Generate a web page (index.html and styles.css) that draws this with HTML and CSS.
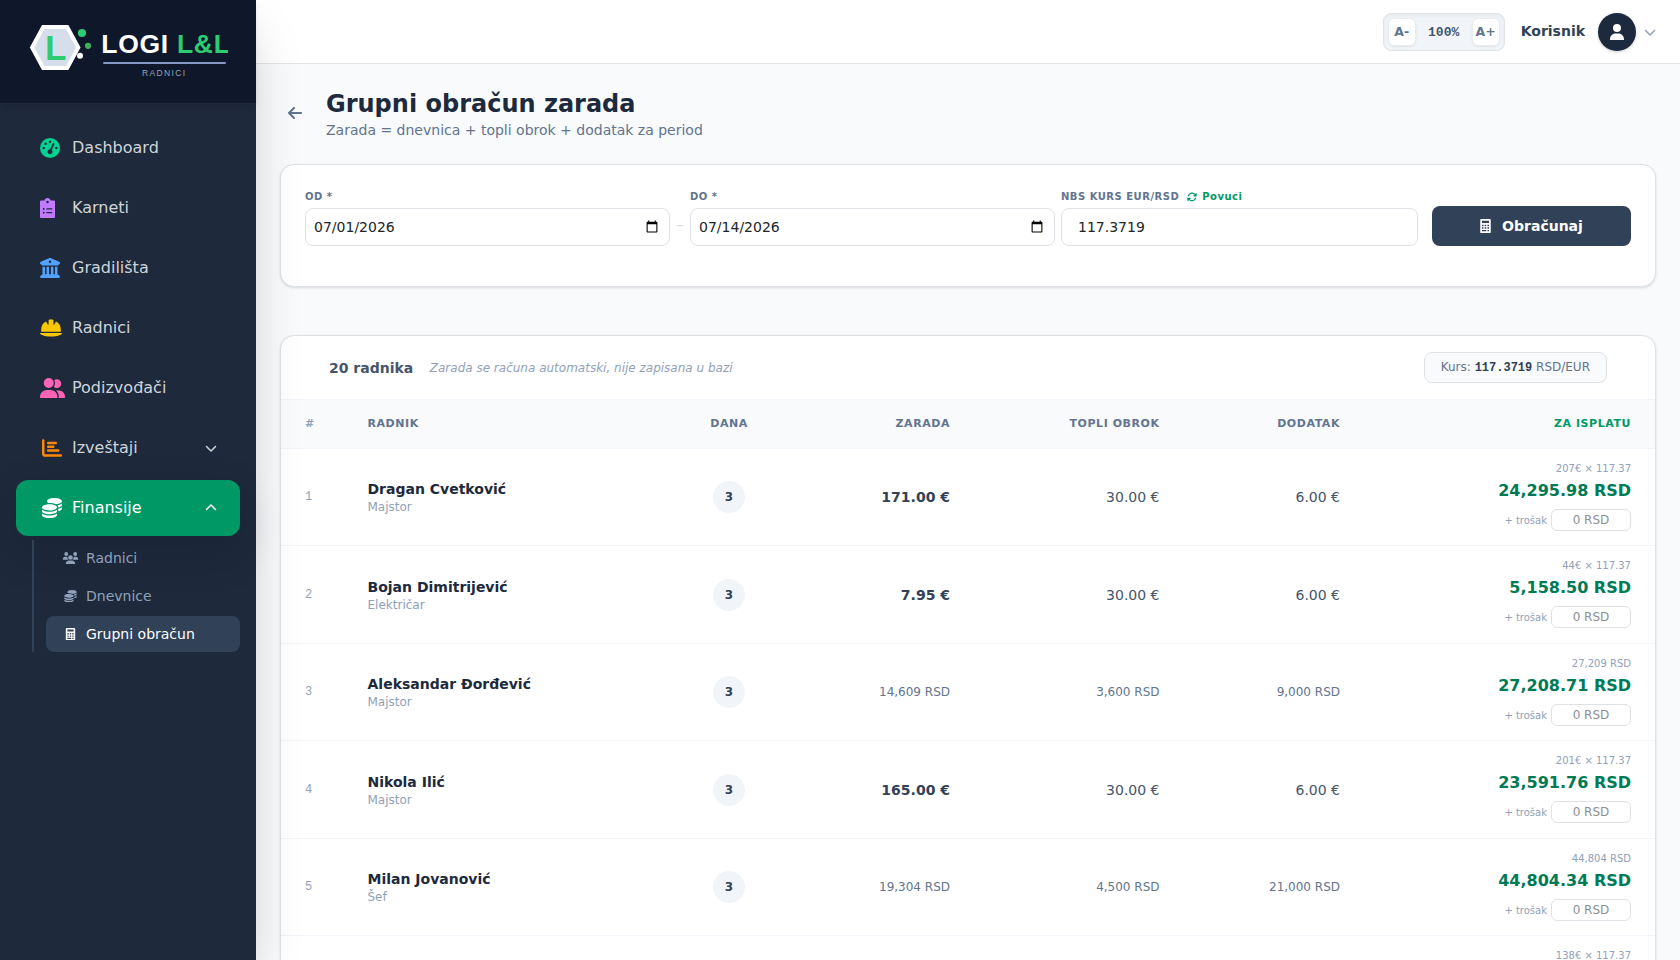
FILE: index.html
```html
<!DOCTYPE html>
<html lang="sr-Latn">
<head>
<meta charset="utf-8">
<title>Grupni obračun zarada</title>
<link rel="stylesheet" href="styles.css">
</head>
<body>
<svg class="sprite" aria-hidden="true">
  <symbol id="i-gauge" viewBox="0 0 512 512"><path d="M0 256a256 256 0 1 1 512 0A256 256 0 1 1 0 256zM288 96a32 32 0 1 0 -64 0 32 32 0 1 0 64 0zM256 416c35.3 0 64-28.7 64-64c0-17.4-6.9-33.1-18.1-44.6L366 161.7c5.3-12.1-.2-26.3-12.3-31.6s-26.3 .2-31.6 12.3L257.9 288c-.6 0-1.3 0-1.9 0c-35.3 0-64 28.7-64 64s28.7 64 64 64zM176 144a32 32 0 1 0 -64 0 32 32 0 1 0 64 0zM96 288a32 32 0 1 0 0-64 32 32 0 1 0 0 64zm352-32a32 32 0 1 0 -64 0 32 32 0 1 0 64 0z"/></symbol>
  <symbol id="i-clip" viewBox="0 0 384 512"><path d="M192 0c-41.800 0-72 26.700-80 64L32 64C14 64 0 78 0 96L0 480c0 18 14 32 32 32l320 0c18 0 32-14 32-32l0-384c0-18-14-32-32-32l-80 0C264 26.700 233.800 0 192 0zm0 72a32 32 0 1 1 0 64 32 32 0 1 1 0-64zM72 280a24 24 0 1 1 48 0 24 24 0 1 1 -48 0zm104-16l128 0c8.800 0 16 7.200 16 16s-7.200 16-16 16l-128 0c-8.800 0-16-7.200-16-16s7.200-16 16-16zM72 376a24 24 0 1 1 48 0 24 24 0 1 1 -48 0zm88 0c0-8.800 7.200-16 16-16l128 0c8.800 0 16 7.200 16 16s-7.200 16-16 16l-128 0c-8.800 0-16-7.200-16-16z"/></symbol>
  <symbol id="i-bank" viewBox="0 0 512 512"><path d="M243.4 2.6l-224 96c-14 6-21.800 21-18.700 35.800S16.800 160 32 160l0 8c0 13.300 10.700 24 24 24l400 0c13.300 0 24-10.700 24-24l0-8c15.200 0 28.300-10.700 31.300-25.600s-4.800-29.900-18.700-35.800l-224-96c-8-3.400-17.200-3.400-25.200 0zM128 224l-64 0 0 196.300c-.6 .3-1.200 .7-1.800 1.100l-48 32c-11.700 7.800-17 22.400-12.900 35.900S17.900 512 32 512l448 0c14.100 0 26.500-9.200 30.600-22.700s-1.100-28.100-12.900-35.900l-48-32c-.6-.4-1.200-.7-1.800-1.100L448 224l-64 0 0 192-40 0 0-192-64 0 0 192-48 0 0-192-64 0 0 192-40 0 0-192zM256 64a32 32 0 1 1 0 64 32 32 0 1 1 0-64z"/></symbol>
  <symbol id="i-helmet" viewBox="0 0 576 512"><path d="M256 32c-17.7 0-32 14.3-32 32l0 2.300 0 99.600c0 5.600-4.500 10.100-10.100 10.100c-3.600 0-7-1.900-8.800-5.100L157.100 87C83 123.500 32 199.800 32 288l0 64 512 0 0-66.400c-.9-87.200-51.700-162.400-125.100-198.600l-48 83.900c-1.800 3.200-5.200 5.100-8.800 5.100c-5.600 0-10.100-4.500-10.100-10.100l0-99.600 0-2.300c0-17.700-14.300-32-32-32l-64 0zM16.600 384C7.400 384 0 391.400 0 400.600c0 4.700 2 9.200 5.800 11.900C27.500 428.400 111.800 480 288 480s260.500-51.600 282.200-67.500c3.800-2.800 5.800-7.200 5.800-11.900c0-9.200-7.400-16.600-16.600-16.600L16.600 384z"/></symbol>
  <symbol id="i-group" viewBox="0 0 640 512"><path d="M96 128a128 128 0 1 1 256 0A128 128 0 1 1 96 128zM0 482.300C0 383.800 79.800 304 178.300 304l91.400 0C368.200 304 448 383.800 448 482.300l0 19.700-10 10L10 512 0 502zM640 502l-10 10-158.500 0c5.400-9.400 8.600-20.300 8.600-32l0-8c0-60.700-27.100-115.200-69.800-151.800c2.400-.1 4.700-.2 7.100-.2l61.400 0C567.800 320 640 392.200 640 481.300zM432 256c-31 0-59-12.600-79.300-32.900C372.400 196.500 384 163.600 384 128c0-26.800-6.600-52.100-18.300-74.300C384.300 40.100 407.200 32 432 32c61.900 0 112 50.100 112 112s-50.100 112-112 112z"/></symbol>
  <symbol id="i-chart" viewBox="0 0 512 512"><path d="M32 32c17.700 0 32 14.300 32 32l0 336c0 8.800 7.200 16 16 16l400 0c17.700 0 32 14.300 32 32s-14.300 32-32 32L80 480c-44.200 0-80-35.800-80-80L0 64C0 46.300 14.300 32 32 32zm96 96c0-17.700 14.300-32 32-32l192 0c17.700 0 32 14.300 32 32s-14.300 32-32 32l-192 0c-17.700 0-32-14.300-32-32zm32 64l128 0c17.700 0 32 14.300 32 32s-14.300 32-32 32l-128 0c-17.700 0-32-14.300-32-32s14.300-32 32-32zm0 96l256 0c17.700 0 32 14.300 32 32s-14.300 32-32 32l-256 0c-17.700 0-32-14.300-32-32s14.300-32 32-32z"/></symbol>
  <symbol id="i-coins" viewBox="0 0 512 512"><path d="M512 80c0 18-14.300 34.600-38.400 48c-29.100 16.100-72.500 27.500-122.300 30.900c-3.700-1.800-7.400-3.500-11.300-5C300.600 137.400 248.200 128 192 128c-8.300 0-16.400 .2-24.500 .6l-1.100-.6C142.300 114.600 128 98 128 80c0-44.200 86-80 192-80S512 35.800 512 80zM160.700 161.100c10.200-.7 20.700-1.100 31.300-1.100c62.200 0 117.400 12.300 152.500 31.400C369.300 204.900 384 221.700 384 240c0 4-.7 7.900-2.100 11.700c-4.600 13.200-17 25.300-35 35.500c-.4 .2-.9 .4-1.300 .7c-35 19.400-90.800 32-153.600 32c-59.600 0-112.900-11.300-148.200-29.100c-1.900-.9-3.700-1.900-5.500-2.900C14.300 274.600 0 258 0 240c0-34.800 53.400-64.500 128-75.400c10.500-1.500 21.400-2.700 32.700-3.500zM416 240c0-21.900-10.600-39.900-24.100-53.400c28.300-4.400 54.200-11.400 76.200-20.500c16.300-6.800 31.500-15.200 43.900-25.500l0 35.400c0 19.300-16.500 37.100-43.800 50.900c-14.600 7.400-32.400 13.700-52.400 18.500c.1-1.800 .2-3.500 .2-5.300zm-32 96c0 18-14.300 34.600-38.400 48c-1.800 1-3.600 1.900-5.500 2.900C304.900 404.700 251.600 416 192 416c-62.800 0-118.600-12.600-153.600-32C14.300 370.600 0 354 0 336l0-35.400c12.500 10.300 27.600 18.700 43.900 25.500C83.400 342.600 135.800 352 192 352s108.600-9.400 148.100-25.900c7.800-3.200 15.300-6.900 22.400-10.900c6.100-3.400 11.800-7.200 17.200-11.200c1.500-1.100 2.900-2.300 4.300-3.400l0 35.400zm32 0l0-57.900c19-4.200 36.500-9.500 52.100-16c16.300-6.800 31.500-15.200 43.900-25.500l0 35.400c0 10.500-5 21-14.900 30.900c-16.300 16.300-45 29.700-81.300 38.400c.1-1.700 .2-3.500 .2-5.300zM192 448c56.200 0 108.600-9.400 148.100-25.900c16.300-6.800 31.500-15.200 43.900-25.500l0 35.400c0 44.200-86 80-192 80S0 476.200 0 432l0-35.400c12.500 10.300 27.600 18.700 43.900 25.500C83.400 438.600 135.800 448 192 448z"/></symbol>
  <symbol id="i-users" viewBox="0 0 640 512"><path d="M144 0a80 80 0 1 1 0 160A80 80 0 1 1 144 0zM512 0a80 80 0 1 1 0 160A80 80 0 1 1 512 0zM0 298.700C0 239.800 47.800 192 106.700 192l42.700 0c15.900 0 31 3.500 44.600 9.700c-1.300 7.200-1.900 14.700-1.900 22.300c0 38.200 16.800 72.500 43.300 96L21.300 320C9.600 320 0 310.400 0 298.700zM404.600 320c26.600-23.500 43.300-57.800 43.300-96c0-7.600-.7-15-1.900-22.300c13.600-6.300 28.700-9.700 44.600-9.700l42.700 0C592.200 192 640 239.800 640 298.700c0 11.800-9.600 21.300-21.300 21.300zM224 224a96 96 0 1 1 192 0 96 96 0 1 1 -192 0zM128 485.300C128 411.700 187.700 352 261.300 352l117.300 0C452.300 352 512 411.700 512 485.300c0 14.700-11.900 26.700-26.700 26.700l-330.700 0c-14.700 0-26.700-11.900-26.700-26.700z"/></symbol>
  <symbol id="i-calc" viewBox="0 0 384 512"><path fill-rule="evenodd" d="M32 0H352Q384 0 384 32V480Q384 512 352 512H32Q0 512 0 480V32Q0 0 32 0zM64 64V144H320V64zM64 208V264H120V208zM164 208V264H220V208zM264 208V264H320V208zM64 304V360H120V304zM164 304V360H220V304zM264 304V360H320V304zM64 400V448H220V400zM264 400V448H320V400z"/></symbol>
  <symbol id="i-back" viewBox="0 0 448 512"><path d="M9.400 233.400c-12.500 12.500-12.500 32.800 0 45.300l160 160c12.500 12.500 32.800 12.500 45.300 0s12.500-32.800 0-45.300L109.200 288 416 288c17.700 0 32-14.300 32-32s-14.300-32-32-32l-306.700 0L214.600 118.600c12.500-12.500 12.500-32.800 0-45.300s-32.800-12.500-45.300 0l-160 160z"/></symbol>
  <symbol id="i-user" viewBox="0 0 448 512"><path d="M224 256A128 128 0 1 0 224 0a128 128 0 1 0 0 256zm-45.700 48C79.800 304 0 383.800 0 482.300L0 502 10 512 438 512 448 502 448 482.300C448 383.800 368.200 304 269.700 304l-91.400 0z"/></symbol>
  <symbol id="i-down" viewBox="0 0 512 512"><path d="M233.400 406.600c12.500 12.500 32.800 12.500 45.300 0l192-192c12.500-12.500 12.500-32.800 0-45.300s-32.800-12.500-45.300 0L256 338.700 86.600 169.400c-12.500-12.500-32.800-12.500-45.300 0s-12.500 32.800 0 45.300l192 192z"/></symbol>
  <symbol id="i-sync" viewBox="0 0 512 512"><path d="M105.100 202.600c7.700-21.800 20.200-42.300 37.800-59.800c62.500-62.500 163.800-62.500 226.300 0L386.300 160 352 160c-17.700 0-32 14.300-32 32s14.300 32 32 32l111.900 0c17.700 0 32-14.300 32-32l0-112c0-17.700-14.300-32-32-32s-32 14.300-32 32l0 35.200L414.400 97.600c-87.500-87.500-229.300-87.500-316.800 0C73.200 122 55.600 150.700 44.800 181.400c-5.900 16.700 2.900 34.900 19.500 40.800s34.900-2.900 40.800-19.500zM39 289.300c-5 1.500-9.800 4.200-13.700 8.200c-4 4-6.700 8.800-8.100 14c-.3 1.200-.6 2.500-.8 3.800c-.3 1.700-.4 3.400-.4 5.100L16 432c0 17.700 14.300 32 32 32s32-14.300 32-32l0-35.100 17.600 17.500c87.500 87.400 229.300 87.400 316.700 0c24.400-24.400 42.100-53.100 52.900-83.800c5.900-16.700-2.900-34.900-19.500-40.800s-34.900 2.900-40.800 19.500c-7.700 21.800-20.200 42.300-37.800 59.800c-62.500 62.500-163.800 62.500-226.300 0L125.600 352l34.400 0c17.700 0 32-14.300 32-32s-14.300-32-32-32L48.400 288c-3.200 0-6.400 .4-9.400 1.300z"/></symbol>
</svg>
<div class="app">
  <aside class="sidebar">
    <div class="brand">
      <svg class="logo" width="228" height="84" viewBox="0 0 228 84">
        <polygon points="32.1,47.500 43.200,27 67.200,27 78.300,47.500 67.200,68 43.200,68" fill="#d6deeb" stroke="#fff" stroke-width="4"/>
        <text class="logo-mark" x="45" y="60">L</text>
        <circle cx="82" cy="33" r="4.100" fill="#2ecc71"/>
        <circle cx="88" cy="45.800" r="3.100" fill="#3fae5d"/>
        <circle cx="80" cy="55.800" r="3" fill="#fff"/>
        <text class="logo-name" x="101.300" y="52.600">LOGI <tspan fill="#2ecc71">L&amp;L</tspan></text>
        <rect x="103" y="62" width="123" height="2" rx="1" fill="#8798c4"/>
        <text class="logo-sub" x="142" y="76">RADNICI</text>
      </svg>
    </div>
    <nav class="nav">
      <a class="item"><svg class="ic green w20"><use href="#i-gauge"/></svg><span>Dashboard</span></a>
      <a class="item"><svg class="ic purple w15"><use href="#i-clip"/></svg><span>Karneti</span></a>
      <a class="item"><svg class="ic blue w20"><use href="#i-bank"/></svg><span>Gradilišta</span></a>
      <a class="item"><svg class="ic yellow w22"><use href="#i-helmet"/></svg><span>Radnici</span></a>
      <a class="item"><svg class="ic pink w25"><use href="#i-group"/></svg><span>Podizvođači</span></a>
      <a class="item group"><svg class="ic orange w20"><use href="#i-chart"/></svg><span>Izveštaji</span><svg class="chev"><use href="#i-down"/></svg></a>
      <a class="item group active"><svg class="ic w20"><use href="#i-coins"/></svg><span>Finansije</span><svg class="chev up"><use href="#i-down"/></svg></a>
      <div class="sub">
        <a class="subitem"><svg><use href="#i-users"/></svg><span>Radnici</span></a>
        <a class="subitem"><svg><use href="#i-coins"/></svg><span>Dnevnice</span></a>
        <a class="subitem current"><svg><use href="#i-calc"/></svg><span>Grupni obračun</span></a>
      </div>
    </nav>
  </aside>
  <div class="main">
    <header class="topbar">
      <div class="zoom"><button>A-</button><span>100%</span><button>A+</button></div>
      <span class="username">Korisnik</span>
      <span class="avatar"><svg><use href="#i-user"/></svg></span>
      <svg class="caret"><use href="#i-down"/></svg>
    </header>
    <main class="content">
      <div class="heading">
        <svg class="back"><use href="#i-back"/></svg>
        <div><h1>Grupni obračun zarada</h1><p>Zarada = dnevnica + topli obrok + dodatak za period</p></div>
      </div>
      <form class="card filters">
        <label class="field date"><span>OD *</span><input type="date" value="2026-07-01"></label>
        <span class="dash">–</span>
        <label class="field date"><span>DO *</span><input type="date" value="2026-07-14"></label>
        <label class="field rate"><span>NBS KURS EUR/RSD <b><svg><use href="#i-sync"/></svg>Povuci</b></span><input type="text" value="117.3719"></label>
        <button type="button" class="calc"><svg><use href="#i-calc"/></svg>Obračunaj</button>
      </form>
      <section class="card results">
        <div class="summary">
          <strong>20 radnika</strong><em>Zarada se računa automatski, nije zapisana u bazi</em>
          <span class="pill">Kurs: <b>117.3719</b> RSD/EUR</span>
        </div>
        <table>
          <colgroup><col class="c1"><col class="c2"><col class="c3"><col class="c4"><col class="c5"><col class="c6"><col class="c7"></colgroup>
          <thead><tr><th class="hash">#</th><th>RADNIK</th><th class="mid">DANA</th><th class="num">ZARADA</th><th class="num">TOPLI OBROK</th><th class="num">DODATAK</th><th class="num pay">ZA ISPLATU</th></tr></thead>
          <tbody>
            <tr><td class="idx">1</td><td><div class="name">Dragan Cvetković</div><div class="role">Majstor</div></td><td class="mid"><span class="days">3</span></td><td class="num eur main-eur">171.00 €</td><td class="num eur">30.00 €</td><td class="num eur">6.00 €</td><td class="num payout"><div class="calcline">207€ × 117.37</div><div class="total">24,295.98 RSD</div><div class="cost">+ trošak<input placeholder="0 RSD"></div></td></tr>
            <tr><td class="idx">2</td><td><div class="name">Bojan Dimitrijević</div><div class="role">Električar</div></td><td class="mid"><span class="days">3</span></td><td class="num eur main-eur">7.95 €</td><td class="num eur">30.00 €</td><td class="num eur">6.00 €</td><td class="num payout"><div class="calcline">44€ × 117.37</div><div class="total">5,158.50 RSD</div><div class="cost">+ trošak<input placeholder="0 RSD"></div></td></tr>
            <tr><td class="idx">3</td><td><div class="name">Aleksandar Đorđević</div><div class="role">Majstor</div></td><td class="mid"><span class="days">3</span></td><td class="num rsd">14,609 RSD</td><td class="num rsd">3,600 RSD</td><td class="num rsd">9,000 RSD</td><td class="num payout"><div class="calcline">27,209 RSD</div><div class="total">27,208.71 RSD</div><div class="cost">+ trošak<input placeholder="0 RSD"></div></td></tr>
            <tr><td class="idx">4</td><td><div class="name">Nikola Ilić</div><div class="role">Majstor</div></td><td class="mid"><span class="days">3</span></td><td class="num eur main-eur">165.00 €</td><td class="num eur">30.00 €</td><td class="num eur">6.00 €</td><td class="num payout"><div class="calcline">201€ × 117.37</div><div class="total">23,591.76 RSD</div><div class="cost">+ trošak<input placeholder="0 RSD"></div></td></tr>
            <tr><td class="idx">5</td><td><div class="name">Milan Jovanović</div><div class="role">Šef</div></td><td class="mid"><span class="days">3</span></td><td class="num rsd">19,304 RSD</td><td class="num rsd">4,500 RSD</td><td class="num rsd">21,000 RSD</td><td class="num payout"><div class="calcline">44,804 RSD</div><div class="total">44,804.34 RSD</div><div class="cost">+ trošak<input placeholder="0 RSD"></div></td></tr>
            <tr><td></td><td></td><td></td><td></td><td></td><td></td><td class="num payout"><div class="calcline">138€ × 117.37</div></td></tr>
          </tbody>
        </table>
      </section>
    </main>
  </div>
</div>
</body>
</html>
```
FILE: styles.css
```css
* { box-sizing: border-box; }
body { margin: 0; font-family: "DejaVu Sans", sans-serif; color: #1e293b; background: #f8fafc; overflow: hidden; }
svg { fill: currentColor; display: block; flex: none; }
.sprite { display: none; }
button, input { font-family: inherit; }
.app { display: flex; height: 960px; overflow: hidden; }

.sidebar { width: 256px; flex: none; position: relative; z-index: 2; background: #1e293b; box-shadow: 0 25px 50px -12px rgba(0,0,0,.25); }
.brand { height: 104px; background: #0f172a; border-bottom: 1px solid #1f2a3c; box-shadow: 0 4px 6px -1px rgba(0,0,0,.1); }
.logo { overflow: hidden; }
.logo-mark { font: bold 35px "Liberation Sans", sans-serif; fill: #2ecc71; }
.logo-name { font: bold 26.500px "Liberation Sans", sans-serif; fill: #fff; letter-spacing: .7px; }
.logo-sub { font: 8.500px "Liberation Sans", sans-serif; fill: #94a3b8; letter-spacing: 1.350px; }

.nav { display: flex; flex-direction: column; gap: 4px; padding: 16px; }
.item { display: flex; align-items: center; height: 56px; padding: 0 24px 1px; font-size: 16px; color: #ced4da; border-radius: 12px; }
.item > span { margin-left: 12px; }
.item:not(.group) > .w15 + span { margin-left: 17px; }
.item:not(.group) > .w22 + span { margin-left: 10px; }
.item:not(.group) > .w25 + span { margin-left: 7px; }
.ic { height: 20px; }
.w15 { width: 15px; } .w20 { width: 20px; } .w22 { width: 22px; } .w25 { width: 25px; }
.item.group > .ic { margin-left: 2px; }
.item.group > span { margin-left: 10px; }
.green { color: #00d492; } .purple { color: #c27aff; } .blue { color: #51a2ff; }
.yellow { color: #fdc700; } .pink { color: #fb64b6; } .orange { color: #ff8904; }
.chev { width: 12px; height: 12px; margin-left: auto; margin-right: -.5px; }
.up { transform: rotate(180deg); }
.item.active { background: #009966; color: #fff; box-shadow: 0 16px 40px rgba(15,23,42,.22); }
.sub { margin: 0 0 0 16px; border-left: 2px solid #314158; padding-left: 12px; display: flex; flex-direction: column; gap: 2px; }
.subitem { display: flex; align-items: center; height: 36px; border-radius: 8px; color: #90a1b9; font-size: 14px; padding-left: 16px; }
.subitem svg { width: 17px; height: 12.500px; margin-right: 7px; }
.subitem.current { background: #314158; color: #fff; }

.main { flex: 1; min-width: 0; }
.topbar { height: 64px; background: #fff; border-bottom: 1px solid #e2e4e8; display: flex; align-items: center; justify-content: flex-end; padding-right: 24px; }
.zoom { display: flex; align-items: center; width: 122px; height: 38px; padding: 0 4px; background: #f1f5f9; border: 1px solid #dee2e6; border-radius: 8px; box-shadow: inset 0 2px 4px rgba(0,0,0,.05); }
.zoom button { width: 28px; height: 28px; padding: 0; border: 1px solid #e9ecef; border-radius: 6px; background: #fff; color: #62748e; font-size: 12.500px; font-weight: bold; box-shadow: 0 1px 2px rgba(0,0,0,.08); }
.zoom span { flex: 1; text-align: center; font: bold 13px "Liberation Mono", monospace; color: #45556c; padding-top: 1px; }
.username { margin-left: 16px; font-size: 14px; font-weight: bold; color: #314158; padding-bottom: 1px; }
.avatar { width: 38px; height: 38px; margin-left: 13px; border-radius: 50%; background: #1d293d; color: #fff; display: grid; place-items: center; box-shadow: 0 1px 3px rgba(0,0,0,.2); }
.avatar svg { width: 14px; height: 16px; }
.caret { width: 12px; height: 12px; margin-left: 8px; color: #90a1b9; }

.content { padding: 24px; }
.heading { display: flex; align-items: center; height: 52px; margin-bottom: 24px; }
.back { width: 14px; height: 16px; margin: 0 24px 2px 8px; color: #62748e; }
h1 { margin: 0; font-size: 24px; line-height: 32px; color: #1d293d; }
.heading p { margin: 0; font-size: 14px; line-height: 20px; color: #62748e; }

.card { background: #fff; border: 1px solid #dee2e6; border-radius: 14px; box-shadow: 0 1px 3px rgba(0,0,0,.1), 0 1px 2px -1px rgba(0,0,0,.1); }
.filters { height: 123px; padding: 24px; display: flex; align-items: flex-start; }
.field > span { display: flex; align-items: center; height: 15px; font-size: 10px; font-weight: bold; letter-spacing: .5px; color: #62748e; margin-bottom: 4px; }
.field b { display: flex; align-items: center; gap: 5px; margin-left: 8px; color: #009966; }
.field b svg { width: 10px; height: 10px; }
.field input { display: block; width: 100%; height: 38px; border: 1px solid #dee2e6; border-radius: 8px; background: #fff; color: #212529; font-size: 14px; padding: 0 8px; }
.field input::-webkit-datetime-edit-month-field,
.field input::-webkit-datetime-edit-day-field,
.field input::-webkit-datetime-edit-year-field { padding: 0; }
.date { width: 365px; }
.rate { width: 357px; margin-left: 6px; }
.rate input { padding: 0 16px; }
.dash { width: 20px; text-align: center; font-size: 14px; line-height: 16px; color: #cad5e2; margin-top: 27px; }
.calc { width: 199px; height: 40px; margin: 17px 0 0 auto; border: 0; border-radius: 8px; background: #314158; color: #fff; font-size: 14px; font-weight: bold; display: flex; align-items: center; justify-content: center; gap: 11px; }
.calc svg { width: 11px; height: 14px; }

.results { margin-top: 48px; overflow: hidden; }
.summary { display: flex; align-items: center; height: 64px; padding: 0 48px; border-bottom: 1px solid #f1f5f9; }
.summary strong { font-size: 14px; color: #45556c; }
.summary em { margin-left: 16.500px; font-size: 12px; color: #90a1b9; }
.pill { margin-left: auto; height: 31px; padding: 0 16px; border: 1px solid #dee2e6; border-radius: 8px; background: #f8fafc; color: #62748e; font-size: 12px; line-height: 28px; }
.pill b { font-family: "Liberation Mono", monospace; color: #314158; }
table { width: 1374px; table-layout: fixed; border-collapse: separate; border-spacing: 0; }
.c1 { width: 62.500px; } .c2 { width: 336px; } .c3 { width: 99px; } .c4 { width: 195.500px; } .c5 { width: 209.500px; } .c6 { width: 180.500px; } .c7 { width: 291px; }
th { height: 49px; padding: 0 24px 2px; background: #f8fafc; border-bottom: 1px solid #f1f5f9; text-align: left; font-size: 11px; letter-spacing: .550px; color: #62748e; }
td { padding: 0 24px; border-bottom: 1px solid #f1f5f9; }
tbody tr:nth-child(odd) td { height: 97px; }
tbody tr:nth-child(even) td { height: 98px; }
.mid { text-align: center; padding: 0; }
th.mid { padding: 0 0 2px; }
th.num, .num { text-align: right; }
th.hash { color: #90a1b9; }
th.pay { color: #009966; }
.payout { vertical-align: top; padding-top: 12px; }
.idx { font: 12px "Liberation Mono", monospace; color: #90a1b9; }
.name { font-size: 14px; font-weight: bold; line-height: 20px; color: #1d293d; }
.role { font-size: 12px; line-height: 16px; color: #90a1b9; }
.days { display: inline-grid; place-items: center; width: 32px; height: 32px; border-radius: 50%; background: #f1f5f9; font-size: 12px; font-weight: bold; color: #314158; vertical-align: middle; }
.eur { font-size: 14px; color: #45556c; }
.main-eur { font-weight: bold; color: #314158; }
.rsd { font-size: 12px; color: #62748e; }
.calcline { font-size: 10px; line-height: 15px; color: #90a1b9; }
.total { font-size: 16px; font-weight: bold; line-height: 24px; color: #007a55; margin-top: 3px; }
.cost { display: flex; align-items: center; justify-content: flex-end; gap: 4px; margin-top: 6px; font-size: 10px; color: #90a1b9; }
.cost input { width: 80px; height: 22px; border: 1px solid #dee2e6; border-radius: 6px; padding: 0; background: #fff; text-align: center; font-size: 12px; }
.cost input::placeholder { color: #8e9093; }
```
